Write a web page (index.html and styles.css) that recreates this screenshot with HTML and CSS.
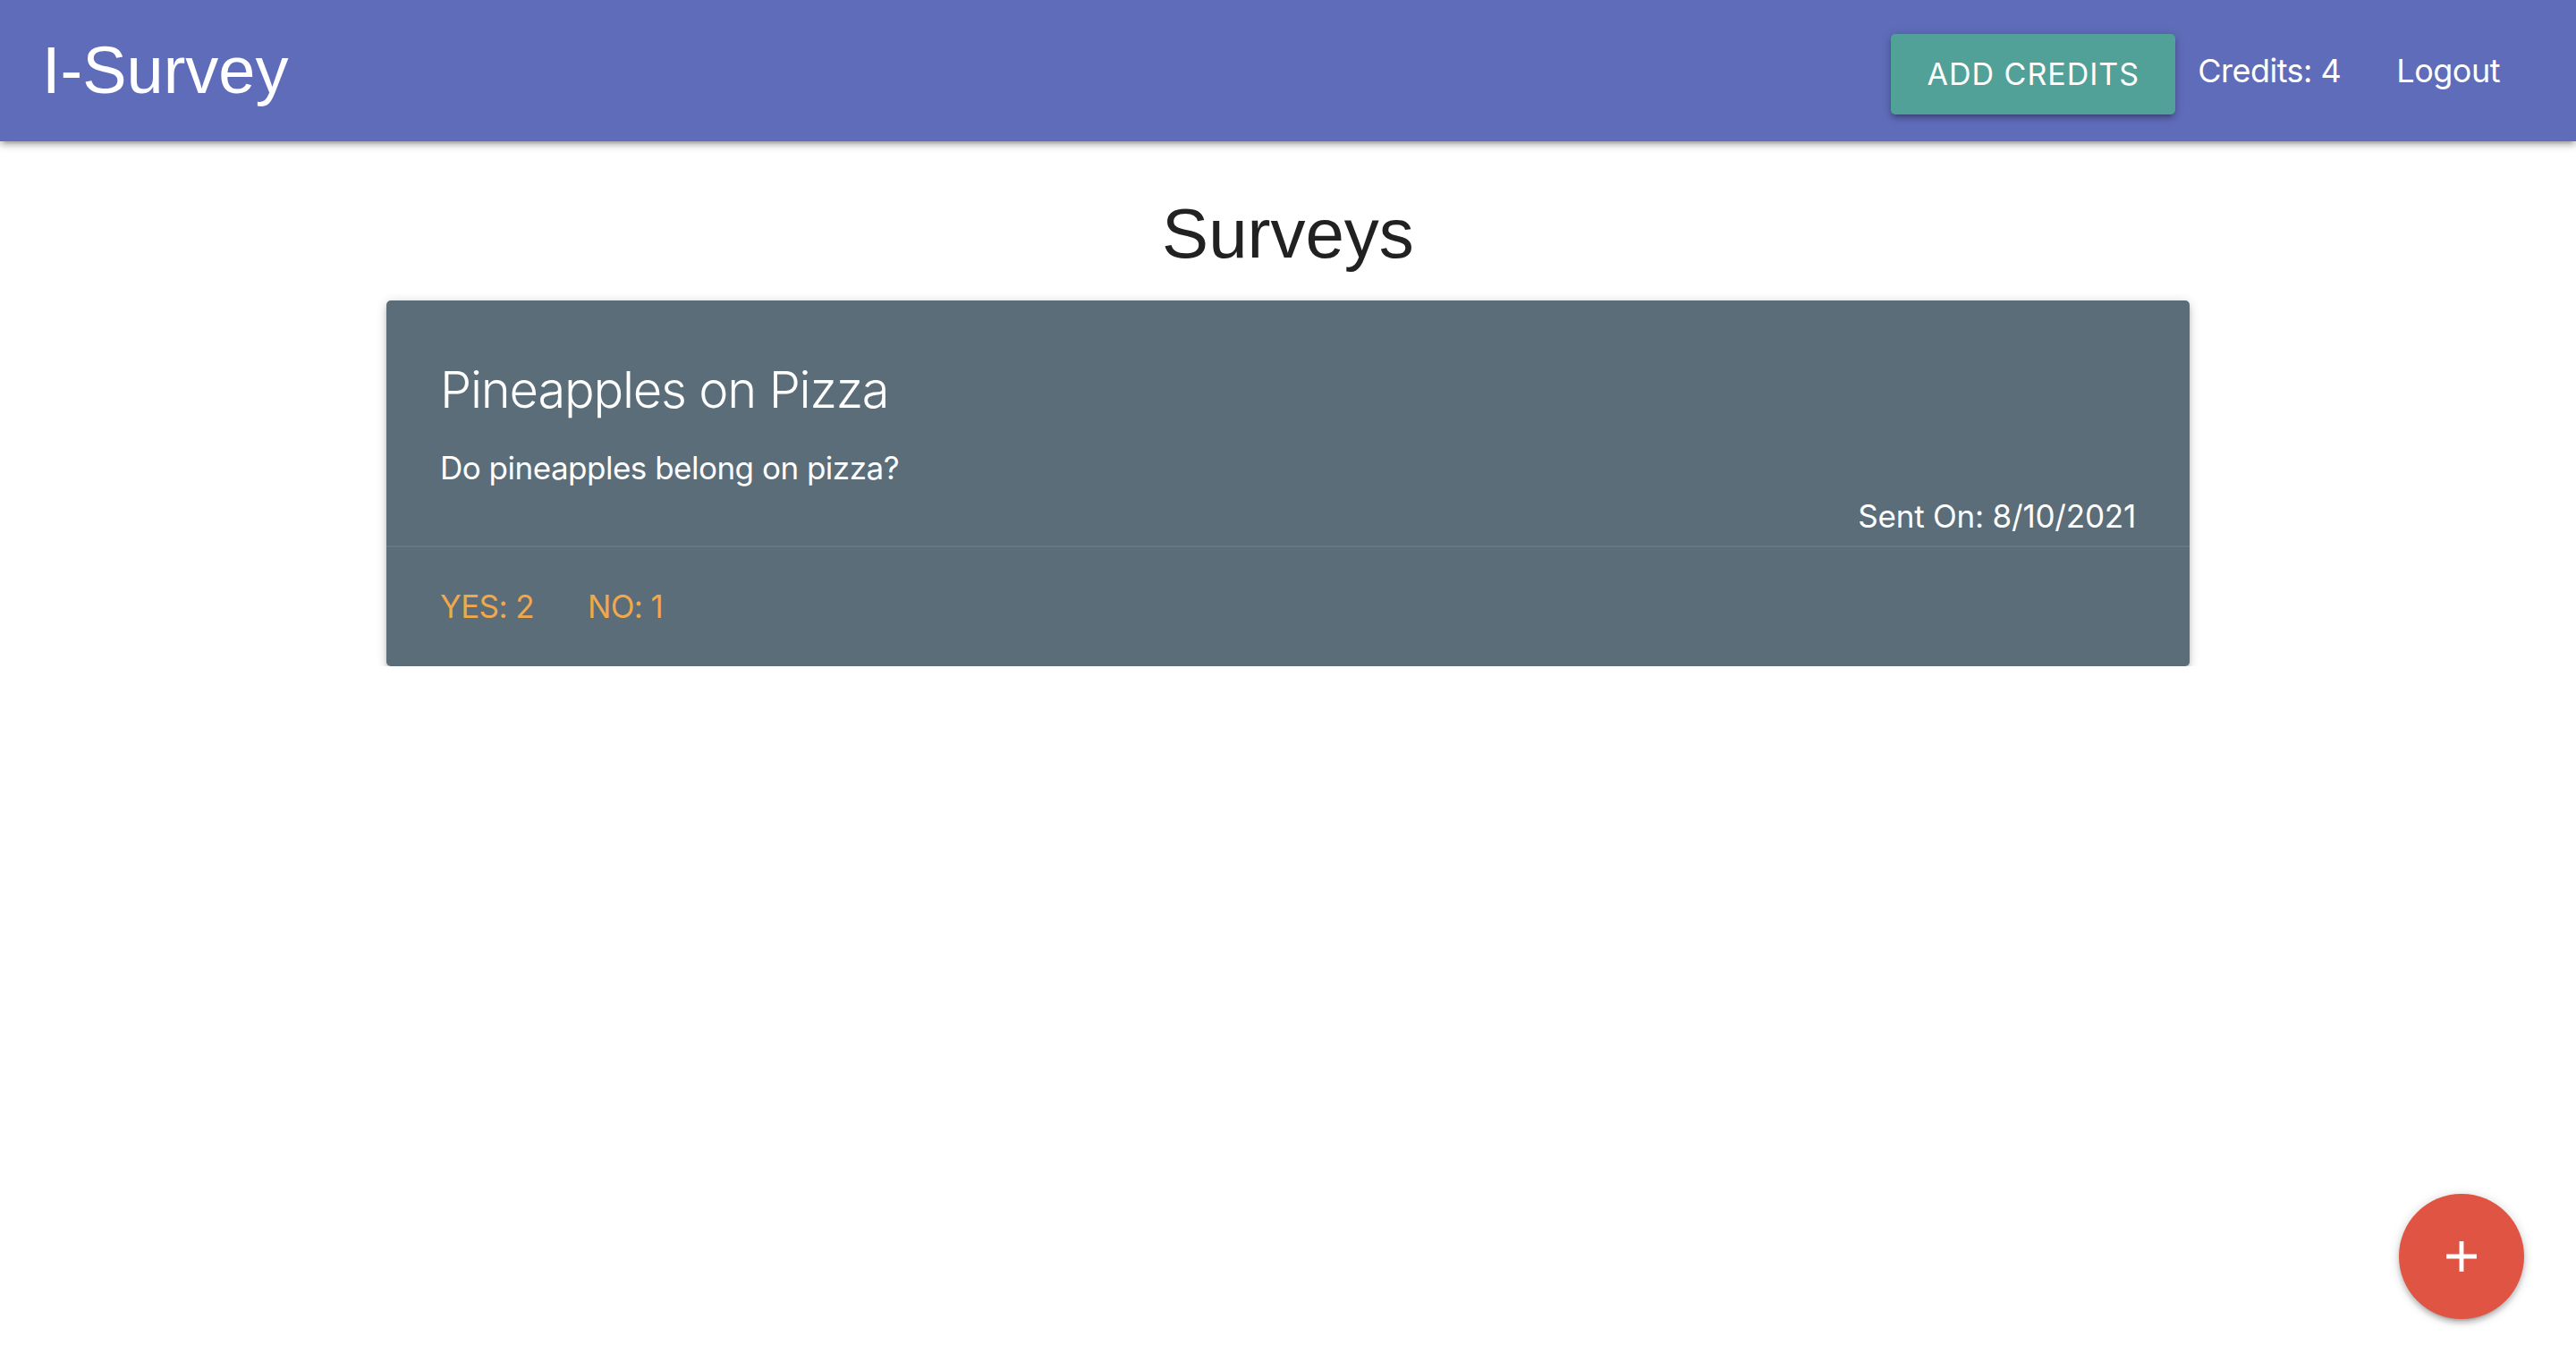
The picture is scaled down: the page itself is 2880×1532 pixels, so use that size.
FILE: index.html
```html
<!DOCTYPE html>
<html lang="en">
<head>
<meta charset="utf-8">
<title>I-Survey</title>
<link rel="stylesheet" href="styles.css">
</head>
<body>
<nav class="navbar">
  <a class="brand-logo" href="#">I-Survey</a>
  <ul class="nav-links">
    <li><button class="btn">Add Credits</button></li>
    <li class="credits">Credits: 4</li>
    <li><a class="nav-link" href="#">Logout</a></li>
  </ul>
</nav>
<main class="container">
  <h1 class="page-title">Surveys</h1>
  <div class="card">
    <div class="card-content">
      <span class="card-title">Pineapples on Pizza</span>
      <p>Do pineapples belong on pizza?</p>
      <p class="right">Sent On: 8/10/2021</p>
    </div>
    <div class="card-action"><a href="#">Yes: 2</a><a href="#">No: 1</a></div>
  </div>
</main>
<div class="fixed-action-btn">
  <a class="btn-floating" href="#" aria-label="Add survey">
    <svg class="add-icon" viewBox="0 0 24 24" width="58" height="58"><path d="M19 13h-6v6h-2v-6H5v-2h6V5h2v6h6v2z" fill="#fff"/></svg>
  </a>
</div>
</body>
</html>
```
FILE: styles.css
```css
html, body {
  margin: 0;
  padding: 0;
}
body {
  background: #ffffff;
  font-family: Inter, "Noto Sans", "Liberation Sans", sans-serif;
  font-size: 36px;
  line-height: 1.5;
  color: rgba(0, 0, 0, 0.87);
}
a { text-decoration: none; }

.navbar {
  height: 158px;
  background: #5f6cba;
  display: flex;
  align-items: center;
  justify-content: space-between;
  padding: 0 48px 0 47px;
  box-shadow: 0 5px 5px 0 rgba(0,0,0,0.14), 0 7px 2px -5px rgba(0,0,0,0.12), 0 2px 12px 0 rgba(0,0,0,0.2);
  position: relative;
  z-index: 2;
}
.brand-logo {
  color: #fff;
  font-family: "Liberation Sans", Arial, sans-serif;
  font-size: 74px;
  line-height: 158px;
}
.nav-links {
  list-style: none;
  margin: 0;
  padding: 0;
  display: flex;
  align-items: center;
  height: 158px;
}
.nav-links li {
  line-height: 158px;
  color: #fff;
  font-size: 36px;
  letter-spacing: -0.5px;
}
.btn {
  display: block;
  height: 90px;
  margin-top: 8px;
  padding: 0 40px;
  border: none;
  border-radius: 5px;
  background: #52a199;
  color: #fff;
  font-family: Inter, "Noto Sans", sans-serif;
  font-size: 34px;
  letter-spacing: 1px;
  text-transform: uppercase;
  line-height: 90px;
  box-shadow: 0 5px 5px 0 rgba(0,0,0,0.14), 0 7px 2px -5px rgba(0,0,0,0.12), 0 2px 12px 0 rgba(0,0,0,0.2);
  cursor: pointer;
}
.credits {
  margin: 0 25px;
}
.nav-link {
  display: block;
  color: #fff;
  padding: 0 37px;
}

.container {
  width: 2016px;
  margin: 0 auto;
}
.page-title {
  margin: 59px 0 31px;
  text-align: center;
  font-family: "Liberation Sans", Arial, sans-serif;
  font-weight: 400;
  font-size: 78px;
  line-height: 88px;
  color: #212121;
}
.card {
  background: #5a6d78;
  border-radius: 5px;
  box-shadow: 0 5px 5px 0 rgba(0,0,0,0.14), 0 7px 2px -5px rgba(0,0,0,0.12), 0 2px 12px 0 rgba(0,0,0,0.2);
}
.card-content {
  padding: 60px;
  color: #fff;
}
.card-title {
  display: block;
  font-size: 56px;
  font-weight: 300;
  letter-spacing: -1.2px;
  line-height: 80px;
  margin-bottom: 20px;
}
.card-content p {
  margin: 0;
  font-size: 35px;
  letter-spacing: -0.5px;
  line-height: 54px;
}
.card-content .right {
  float: right;
  letter-spacing: -0.2px;
}
.card-action {
  border-top: 2px solid rgba(160, 160, 160, 0.2);
  padding: 39px 60px 40px;
  line-height: 54px;
}
.card-action a {
  color: #f1a84b;
  margin-right: 60px;
  text-transform: uppercase;
  font-size: 35px;
  letter-spacing: -0.6px;
}

.fixed-action-btn {
  position: fixed;
  right: 58px;
  bottom: 57px;
}
.btn-floating {
  width: 140px;
  height: 140px;
  border-radius: 50%;
  background: #e05443;
  display: flex;
  align-items: center;
  justify-content: center;
  box-shadow: 0 5px 5px 0 rgba(0,0,0,0.14), 0 7px 2px -5px rgba(0,0,0,0.12), 0 2px 12px 0 rgba(0,0,0,0.2);
}
.add-icon {
  display: block;
}
```
